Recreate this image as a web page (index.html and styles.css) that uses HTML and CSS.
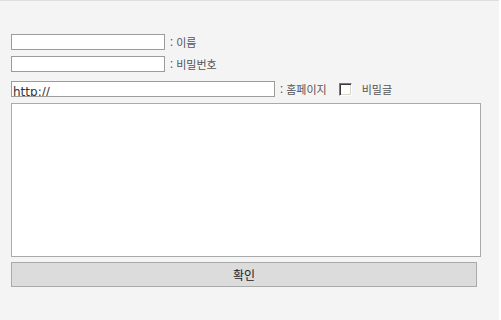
FILE: index.html
```html
<!DOCTYPE html>
<html lang="ko">
<head>
    <meta charset="UTF-8">
    <meta name="viewport" content="width=device-width, initial-scale=1.0">
    <title>글쓰기</title>
    <link rel="stylesheet" href="styles.css">
</head>
<body>
    <div class="board">
        <form class="write-form" onsubmit="return false;">
            <div class="field">
                <input class="text-input" type="text" name="name">
                <span class="label">: 이름</span>
            </div>
            <div class="field">
                <input class="text-input" type="password" name="pass">
                <span class="label">: 비밀번호</span>
            </div>
            <div class="field field-url">
                <input class="text-input url-input" type="text" name="homepage" value="http://">
                <span class="label">: 홈페이지</span>
                <input class="secret-check" type="checkbox" name="secret">
                <span class="label">비밀글</span>
            </div>
            <textarea class="content" name="content"></textarea>
            <button class="submit-btn" type="submit">확인</button>
        </form>
    </div>
</body>
</html>
```

FILE: styles.css
```css
body {
    margin: 0;
    background-color: #ffffff;
    font-family: "Noto Sans CJK KR", "Liberation Sans", sans-serif;
}

.board {
    width: 499px;
    height: 320px;
    box-sizing: border-box;
    background-color: #f4f4f4;
    border-top: 1px solid #dedede;
    padding: 33px 0 0 11px;
}

.write-form {
    display: flex;
    flex-direction: column;
    align-items: flex-start;
}

.field {
    display: flex;
    align-items: center;
    height: 16px;
    margin-bottom: 6px;
}

.field-url {
    margin-top: 3px;
    margin-bottom: 6px;
}

.text-input {
    width: 154px;
    height: 16px;
    box-sizing: border-box;
    margin: 0;
    padding: 0 1px;
    border: 1px solid #9c9c9c;
    background-color: #ffffff;
    outline: none;
}

.url-input {
    width: 264px;
    padding-top: 5px;
    font-family: "DejaVu Sans", sans-serif;
    font-size: 12px;
    line-height: 13px;
    color: #333333;
}

.label {
    margin-left: 5px;
    font-size: 11px;
    line-height: 16px;
    color: #555555;
    white-space: nowrap;
}

.secret-check {
    -webkit-appearance: none;
    appearance: none;
    width: 13px;
    height: 13px;
    box-sizing: border-box;
    margin: 0 10px 0 12px;
    border: 1px solid;
    border-color: #7a7a7a #ffffff #ffffff #7a7a7a;
    box-shadow: inset 1px 1px 0 #3c3c3c, inset -1px -1px 0 #d8d4cc;
    background-color: #ffffff;
}

.secret-check + .label {
    margin-left: 0;
}

.content {
    width: 470px;
    height: 154px;
    box-sizing: border-box;
    margin: 0;
    border: 1px solid #aaaaaa;
    background-color: #ffffff;
    resize: none;
    outline: none;
}

.submit-btn {
    width: 466px;
    height: 25px;
    margin-top: 5px;
    padding: 0;
    border: 1px solid #aaaaaa;
    background-color: #dcdcdc;
    font-family: "Noto Sans CJK KR", sans-serif;
    font-size: 12px;
    color: #222222;
    cursor: pointer;
}
```
